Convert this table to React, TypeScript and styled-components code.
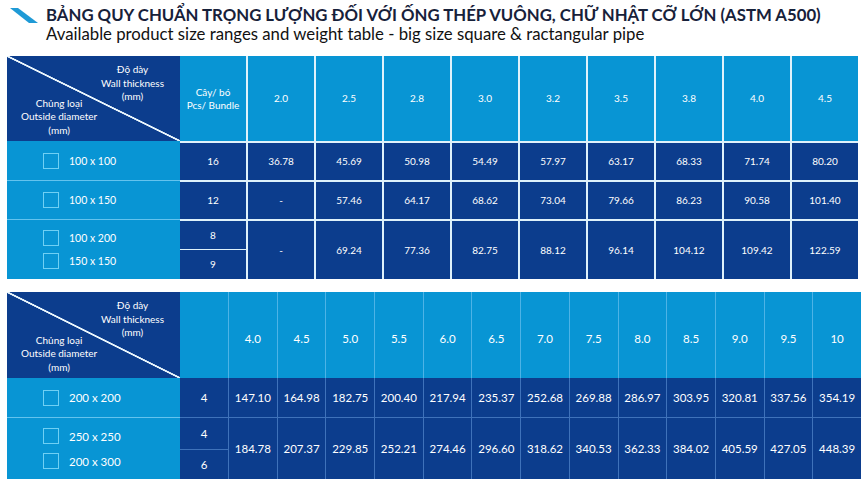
import React from "react";
import styled, { createGlobalStyle } from "styled-components";

const NAVY = "#0c3d8d";
const SKY = "#0895d4";
const WHITE_LINE = "#dff2fb";
const T2_HEAD_LINE = "#4db3e6";
const T2_BODY_LINE = "#3f72ba";
const SKY_LINE = "#63c3ee";

const Global = createGlobalStyle`
  html, body { margin: 0; padding: 0; background: #ffffff; }
  body { font-family: "Lato", "Open Sans", sans-serif; }
`;

const Page = styled.div`
  width: 863px;
  height: 487px;
  box-sizing: border-box;
  padding: 5px 0 0 7px;
  display: flex;
  flex-direction: column;
`;

const Heading = styled.header`
  display: flex;
  align-items: flex-start;
  gap: 8px;
  padding-left: 3px;
  height: 51px;
`;

const Mark = styled.svg`
  flex: none;
  margin-top: 3px;
`;

const Titles = styled.div`
  display: flex;
  flex-direction: column;
  gap: 1px;
`;

const Title = styled.h1`
  margin: 0;
  font-size: 16.75px;
  line-height: 19px;
  font-weight: 700;
  color: #17213a;
  white-space: nowrap;
`;

const Subtitle = styled.p`
  margin: 0;
  font-size: 16.75px;
  line-height: 17px;
  color: #111;
  white-space: nowrap;
`;

const Grid = styled.div<{ $cols: string; $rows: string }>`
  display: grid;
  grid-template-columns: ${(p) => p.$cols};
  grid-template-rows: ${(p) => p.$rows};
  width: fit-content;
`;

const Cell = styled.div<{
  $bg: string;
  $left?: string;
  $top?: string;
  $size?: number;
  $span?: number;
  $drop?: number;
}>`
  box-sizing: border-box;
  background: ${(p) => p.$bg};
  border-left: ${(p) => p.$left ?? "none"};
  border-top: ${(p) => p.$top ?? "none"};
  grid-row: span ${(p) => p.$span ?? 1};
  display: flex;
  align-items: center;
  justify-content: center;
  text-align: center;
  padding-top: ${(p) => p.$drop ?? 0}px;
  color: #fff;
  font-size: ${(p) => p.$size ?? 10}px;
  line-height: 13px;
`;

const Corner = styled.div`
  box-sizing: border-box;
  background: linear-gradient(
    to top right,
    ${NAVY} calc(50% - 1.2px),
    #eaf6fd calc(50% - 0.6px),
    #eaf6fd calc(50% + 0.6px),
    ${NAVY} calc(50% + 1.2px)
  );
  display: grid;
  grid-template-areas: "stack";
  padding: 7px 16px 4px 14px;
  color: #fff;
  font-size: 10px;
  line-height: 13.5px;
  text-align: center;
`;

const CornerTop = styled.div`
  grid-area: stack;
  align-self: start;
  justify-self: end;
`;

const CornerBottom = styled.div`
  grid-area: stack;
  align-self: end;
  justify-self: start;
`;

const SizeCell = styled.div<{ $top?: boolean; $span?: number; $gap: number; $size: number }>`
  box-sizing: border-box;
  background: ${SKY};
  border-top: ${(p) => (p.$top ? `1px solid ${SKY_LINE}` : "none")};
  grid-row: span ${(p) => p.$span ?? 1};
  display: flex;
  flex-direction: column;
  justify-content: center;
  gap: ${(p) => p.$gap}px;
  padding-left: 36px;
  color: #fff;
  font-size: ${(p) => p.$size}px;
`;

const SizeLine = styled.div`
  display: flex;
  align-items: center;
  gap: 10px;
`;

const Box = styled.span`
  display: inline-block;
  width: 14px;
  height: 14px;
  border: 1px solid #6fd0f4;
`;

const Section = styled.div<{ $mt: number }>`
  margin-top: ${(p) => p.$mt}px;
`;

const t1Thick = ["2.0", "2.5", "2.8", "3.0", "3.2", "3.5", "3.8", "4.0", "4.5"];
const t1Rows = [
  { sizes: ["100 x 100"], pcs: ["16"], vals: ["36.78", "45.69", "50.98", "54.49", "57.97", "63.17", "68.33", "71.74", "80.20"] },
  { sizes: ["100 x 150"], pcs: ["12"], vals: ["-", "57.46", "64.17", "68.62", "73.04", "79.66", "86.23", "90.58", "101.40"] },
  { sizes: ["100 x 200", "150 x 150"], pcs: ["8", "9"], vals: ["-", "69.24", "77.36", "82.75", "88.12", "96.14", "104.12", "109.42", "122.59"] },
];

const t2Thick = ["4.0", "4.5", "5.0", "5.5", "6.0", "6.5", "7.0", "7.5", "8.0", "8.5", "9.0", "9.5", "10"];
const t2Rows = [
  {
    sizes: ["200 x 200"],
    pcs: ["4"],
    vals: ["147.10", "164.98", "182.75", "200.40", "217.94", "235.37", "252.68", "269.88", "286.97", "303.95", "320.81", "337.56", "354.19"],
  },
  {
    sizes: ["250 x 250", "200 x 300"],
    pcs: ["4", "6"],
    vals: ["184.78", "207.37", "229.85", "252.21", "274.46", "296.60", "318.62", "340.53", "362.33", "384.02", "405.59", "427.05", "448.39"],
  },
];

const CornerHead = () => (
  <Corner>
    <CornerTop>
      Độ dày
      <br />
      Wall thickness
      <br />
      (mm)
    </CornerTop>
    <CornerBottom>
      Chủng loại
      <br />
      Outside diameter
      <br />
      (mm)
    </CornerBottom>
  </Corner>
);

const Sizes = ({ sizes, top, gap, size }: { sizes: string[]; top: boolean; gap: number; size: number }) => (
  <SizeCell $top={top} $span={sizes.length} $gap={gap} $size={size}>
    {sizes.map((s) => (
      <SizeLine key={s}>
        <Box />
        <span>{s}</span>
      </SizeLine>
    ))}
  </SizeCell>
);

const TableOne = () => {
  const white = `2px solid ${WHITE_LINE}`;
  return (
    <Grid $cols="173px 66px repeat(9, 68px)" $rows="85px 39px 39px 30px 30px">
      <CornerHead />
      <Cell $bg={SKY}>
        Cây/ bó
        <br />
        Pcs/ Bundle
      </Cell>
      {t1Thick.map((t) => (
        <Cell key={t} $bg={SKY} $left={white}>
          {t}
        </Cell>
      ))}
      {t1Rows.map((r, i) => (
        <React.Fragment key={i}>
          <Sizes sizes={r.sizes} top={i > 0} gap={7} size={10.5} />
          <Cell $bg={NAVY} $top={white}>
            {r.pcs[0]}
          </Cell>
          {r.vals.map((v, j) => (
            <Cell key={j} $bg={NAVY} $left={white} $top={white} $span={r.pcs.length}>
              {v}
            </Cell>
          ))}
          {r.pcs.slice(1).map((p) => (
            <Cell key={p} $bg={NAVY} $top={`1px solid ${WHITE_LINE}`}>
              {p}
            </Cell>
          ))}
        </React.Fragment>
      ))}
    </Grid>
  );
};

const TableTwo = () => {
  const head = `1px solid ${T2_HEAD_LINE}`;
  const body = `1px solid ${T2_BODY_LINE}`;
  return (
    <Grid $cols="173px 48px repeat(13, 48.7px)" $rows="86px 39px 32px 30px">
      <CornerHead />
      <Cell $bg={SKY} />
      {t2Thick.map((t) => (
        <Cell key={t} $bg={SKY} $left={head} $size={11.5} $drop={6}>
          {t}
        </Cell>
      ))}
      {t2Rows.map((r, i) => (
        <React.Fragment key={i}>
          <Sizes sizes={r.sizes} top={i > 0} gap={9} size={11.5} />
          <Cell $bg={NAVY} $top={i > 0 ? body : undefined} $size={11.5}>
            {r.pcs[0]}
          </Cell>
          {r.vals.map((v, j) => (
            <Cell key={j} $bg={NAVY} $left={body} $top={i > 0 ? body : undefined} $span={r.pcs.length} $size={11.5}>
              {v}
            </Cell>
          ))}
          {r.pcs.slice(1).map((p) => (
            <Cell key={p} $bg={NAVY} $top={body} $size={11.5}>
              {p}
            </Cell>
          ))}
        </React.Fragment>
      ))}
    </Grid>
  );
};

export default function App() {
  return (
    <>
      <Global />
      <Page>
        <Heading>
          <Mark width="28" height="15" viewBox="0 0 28 15">
            <polygon points="0,0 8,0 28,15 19,15" fill="#1f9ad6" />
          </Mark>
          <Titles>
            <Title>BẢNG QUY CHUẨN TRỌNG LƯỢNG ĐỐI VỚI ỐNG THÉP VUÔNG, CHỮ NHẬT CỠ LỚN (ASTM A500)</Title>
            <Subtitle>Available product size ranges and weight table - big size square &amp; ractangular pipe</Subtitle>
          </Titles>
        </Heading>
        <TableOne />
        <Section $mt={13}>
          <TableTwo />
        </Section>
      </Page>
    </>
  );
}
